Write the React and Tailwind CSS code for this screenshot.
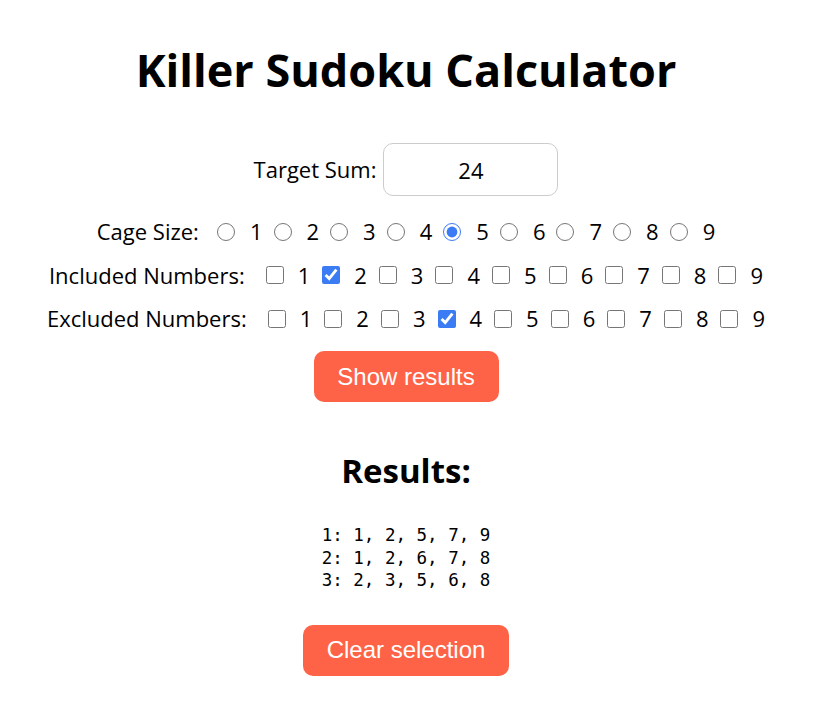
import { useState } from 'react';

const NUMS = [1, 2, 3, 4, 5, 6, 7, 8, 9];

const results = [
  [1, 2, 5, 7, 9],
  [1, 2, 6, 7, 8],
  [2, 3, 5, 6, 8],
];

const App = () => {
  const [sum, setSum] = useState('24');
  const [size, setSize] = useState(5);
  const [included, setIncluded] = useState([2]);
  const [excluded, setExcluded] = useState([4]);

  const toggle = (list, setList, n) => {
    setList(list.includes(n) ? list.filter((x) => x !== n) : [...list, n]);
  };

  const clear = () => {
    setIncluded([]);
    setExcluded([]);
  };

  return (
    <div className="min-h-[720px] pr-[13px] bg-white text-black flex flex-col items-center font-['Open_Sans',sans-serif] text-[22px]">
      <h1 className="mt-[40px] text-[45px] font-bold leading-[60px]">Killer Sudoku Calculator</h1>

      <div className="mt-[43px] flex items-center">
        <span className="mr-[7px]">Target Sum:</span>
        <input
          type="number"
          value={sum}
          onChange={(e) => setSum(e.target.value)}
          className="w-[175px] h-[53px] rounded-[10px] border border-[#cccccc] text-center text-[22px] outline-none [appearance:textfield] [&::-webkit-inner-spin-button]:appearance-none"
        />
      </div>

      <div className="mt-[14px] h-[43px] flex items-center">
        <span className="mr-[7px]">Cage Size:</span>
        {NUMS.map((n) => (
          <label key={n} className="flex items-center ml-[11px]">
            <input
              type="radio"
              name="cage"
              checked={size === n}
              onChange={() => setSize(n)}
              className="m-0 w-[18px] h-[18px] accent-[#3b7cf5]"
            />
            <span className="ml-[15px]">{n}</span>
          </label>
        ))}
      </div>

      <div className="h-[44px] flex items-center">
        <span className="mr-[9px]">Included Numbers:</span>
        {NUMS.map((n) => (
          <label key={n} className="flex items-center ml-[12px]">
            <input
              type="checkbox"
              checked={included.includes(n)}
              onChange={() => toggle(included, setIncluded, n)}
              className="m-0 w-[18px] h-[18px] accent-[#3b7cf5]"
            />
            <span className="ml-[14px]">{n}</span>
          </label>
        ))}
      </div>

      <div className="h-[43px] flex items-center">
        <span className="mr-[9px]">Excluded Numbers:</span>
        {NUMS.map((n) => (
          <label key={n} className="flex items-center ml-[12px]">
            <input
              type="checkbox"
              checked={excluded.includes(n)}
              onChange={() => toggle(excluded, setExcluded, n)}
              className="m-0 w-[18px] h-[18px] accent-[#3b7cf5]"
            />
            <span className="ml-[14px]">{n}</span>
          </label>
        ))}
      </div>

      <button className="mt-[11px] w-[185px] h-[51px] rounded-[10px] bg-[#ff6347] text-white text-[24px] font-['Liberation_Sans',Arial,sans-serif]">
        Show results
      </button>

      <h2 className="mt-[47px] text-[33px] font-bold leading-[44px]">Results:</h2>

      <pre className="mt-[31px] font-['DejaVu_Sans_Mono',monospace] text-[17.5px] leading-[22.5px]">
        {results.map((r, i) => `${i + 1}: ${r.join(', ')}`).join('\n')}
      </pre>

      <button
        onClick={clear}
        className="mt-[33px] w-[206px] h-[51px] rounded-[10px] bg-[#ff6347] text-white text-[24px] font-['Liberation_Sans',Arial,sans-serif]"
      >
        Clear selection
      </button>
    </div>
  );
};

export default App;
